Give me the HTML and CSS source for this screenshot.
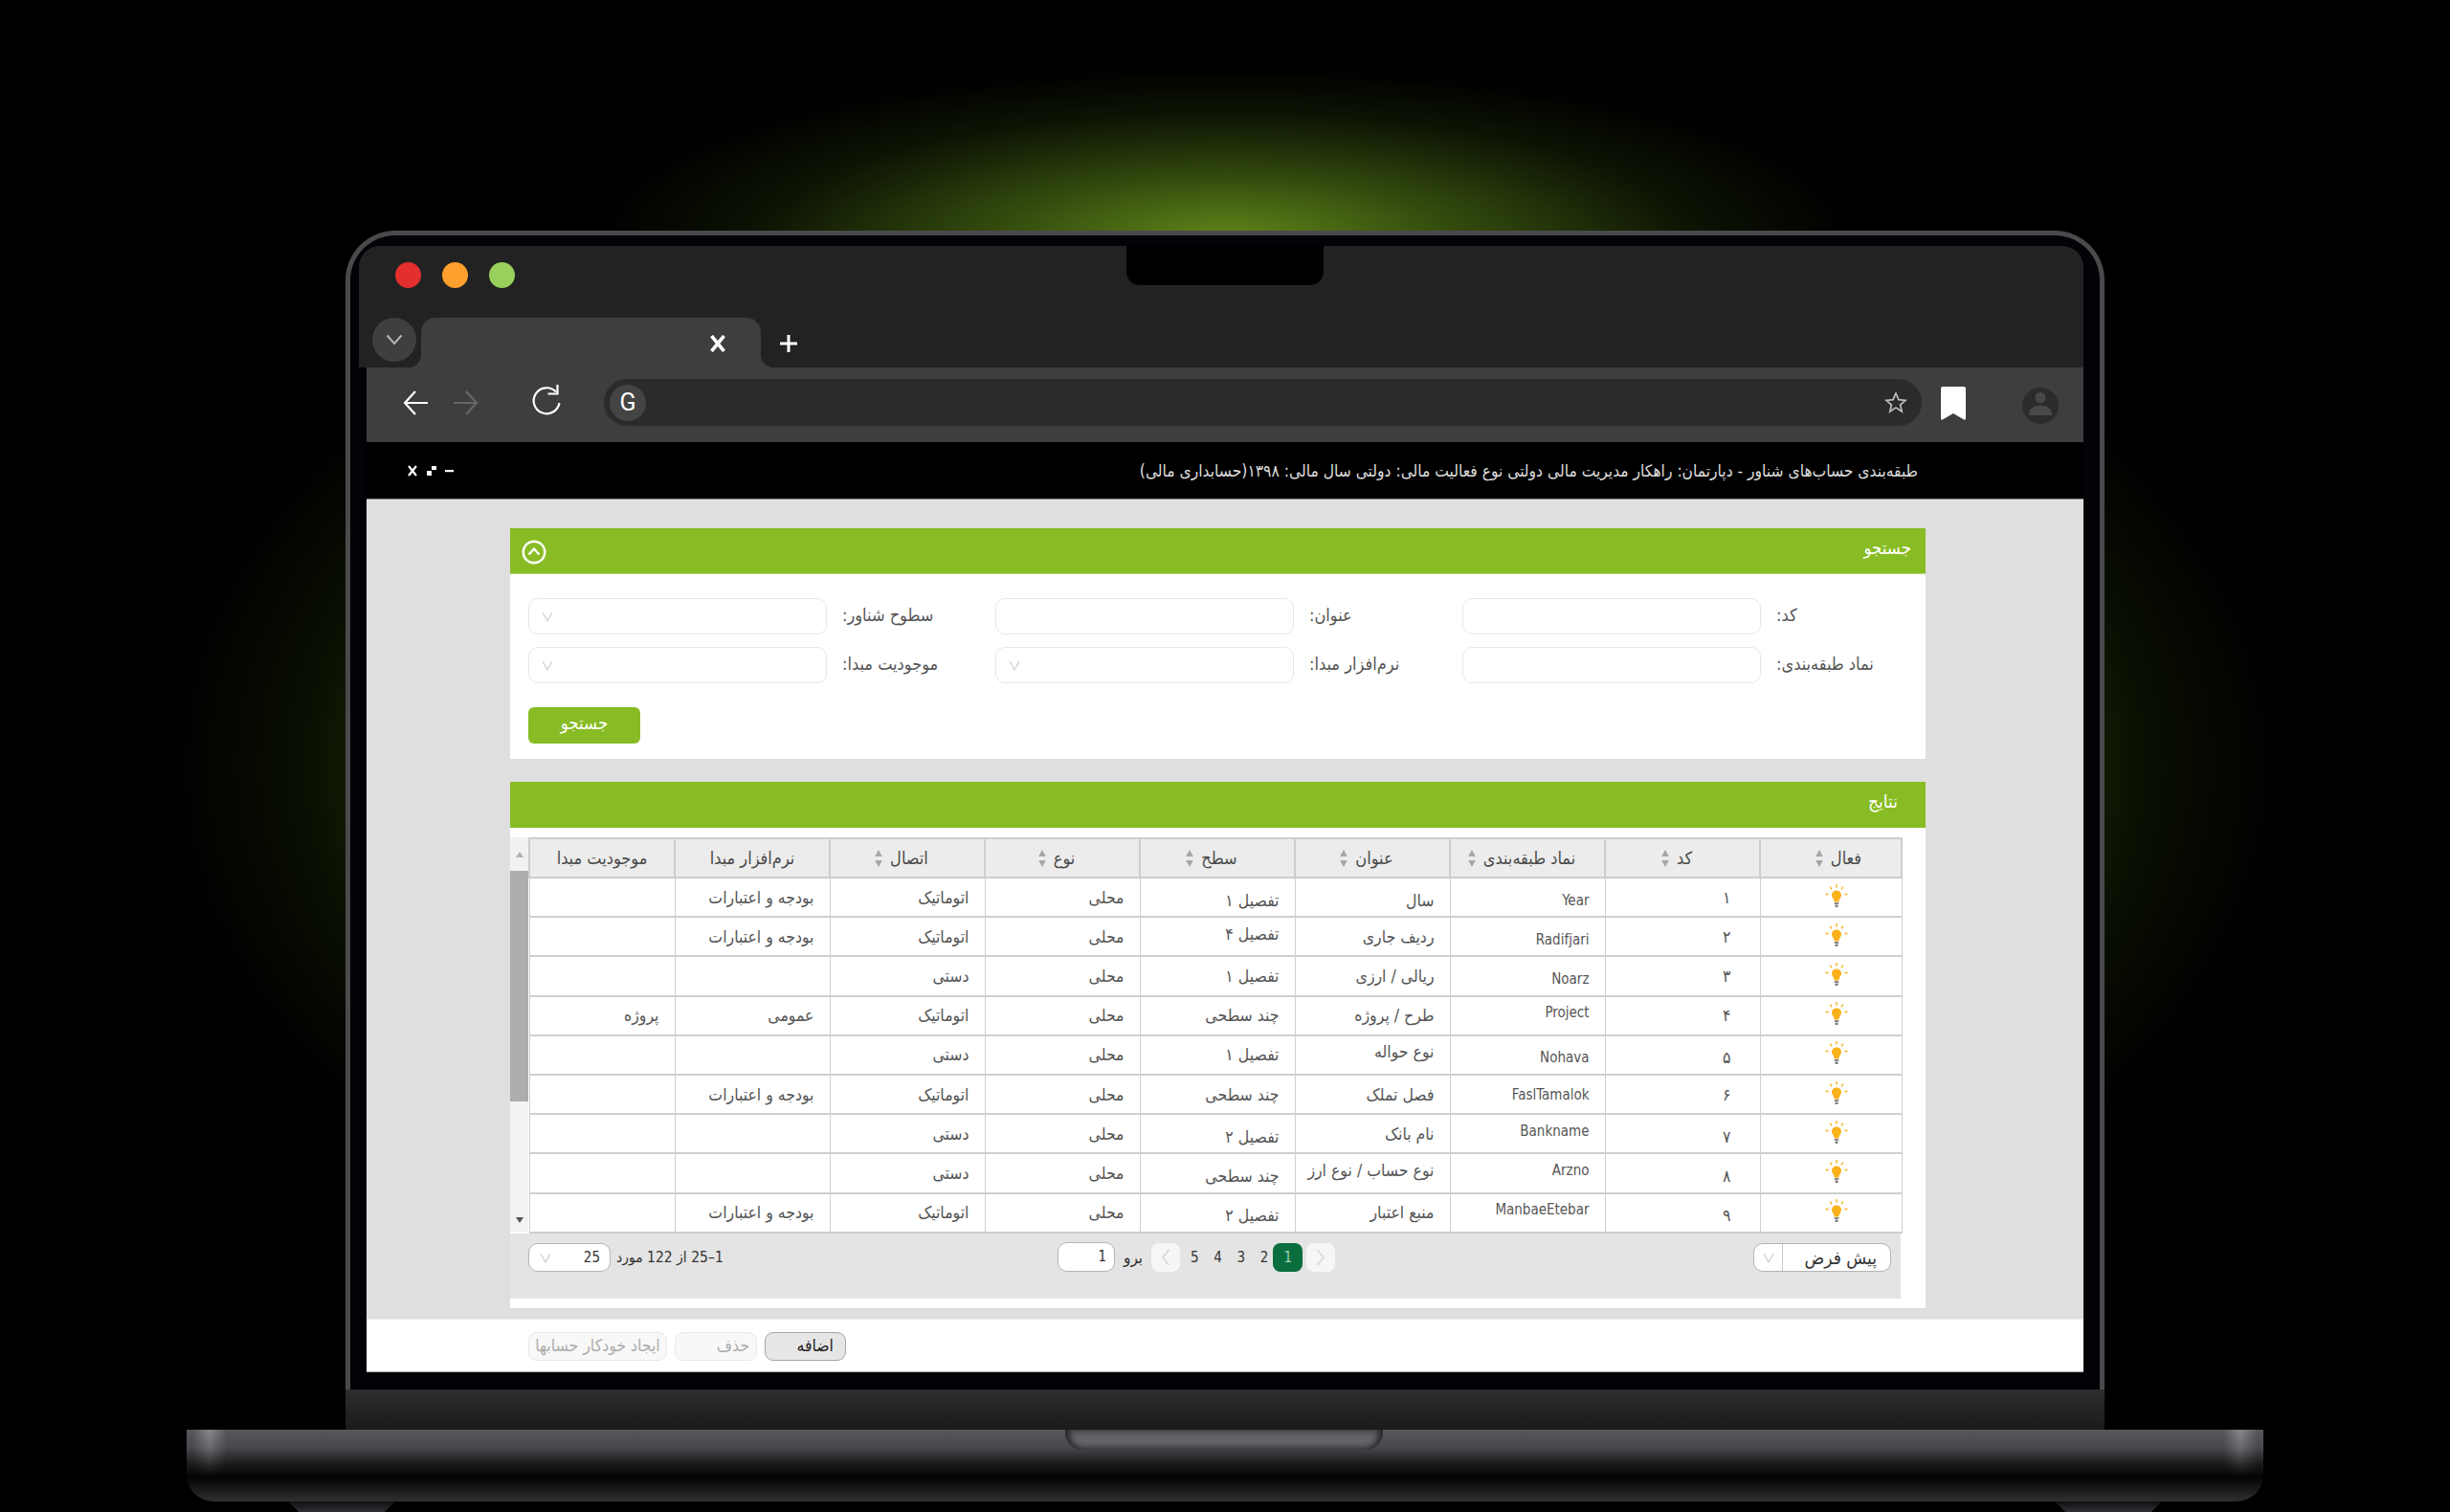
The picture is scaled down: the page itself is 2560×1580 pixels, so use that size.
FILE: index.html
```html
<!DOCTYPE html>
<html lang="fa">
<head>
<meta charset="utf-8">
<title>طبقه‌بندی حساب‌های شناور</title>
<link rel="stylesheet" href="styles.css">
</head>
<body>
<svg class="defs" width="0" height="0" aria-hidden="true">
  <symbol id="bulb" viewBox="0 0 24 26">
    <path d="M12 6.500c-3 0-5 2.200-5 4.800 0 2.300 1.600 3.500 2.200 5.100.3.700.4 1.500.5 2.100h4.600c.1-.6.200-1.400.5-2.100.6-1.600 2.200-2.800 2.200-5.100 0-2.600-2-4.800-5-4.800z" fill="#fbb11a"/>
    <rect x="9.800" y="19" width="4.400" height="2.200" fill="#8a8a8a"/>
    <rect x="10.400" y="21.700" width="3.200" height="2.200" rx="1" fill="#777"/>
    <path d="M12 0v3.500M5.200 2.500l1.700 2.800M18.800 2.500l-1.700 2.800M.5 10.500h3M20.500 10.500h3" stroke="#fbb11a" stroke-width="1.400" fill="none"/>
  </symbol>
  <symbol id="sort" viewBox="0 0 8 20">
    <path d="M4 1l3.800 7H.2zM4 19l3.800-7H.2z" fill="#a6a6a6"/>
  </symbol>
  <symbol id="chev" viewBox="0 0 14 14">
    <path d="M2 3l5 9 5-9" fill="none" stroke="#cfcfcf" stroke-width="1.300"/>
  </symbol>
</svg>
<div class="stage">
  <div class="glow"></div>
  <div class="lid">
    <div class="notch"></div>
    <div class="titlebar">
      <div class="dots"><span class="dot red"></span><span class="dot orange"></span><span class="dot green"></span></div>
      <div class="tabstrip">
        <div class="tabmenu"><svg width="18" height="12" viewBox="0 0 18 12"><path d="M1.500 1.500L9 10l7.500-8.500" fill="none" stroke="#b5b5b5" stroke-width="2"/></svg></div>
        <div class="tab"><svg class="tabclose" width="18" height="18" viewBox="0 0 18 18"><path d="M2.500 1l13 16M15.500 1l-13 16" stroke="#fff" stroke-width="3.600" fill="none"/></svg></div>
        <svg class="tabplus" width="18" height="18" viewBox="0 0 18 18"><path d="M9 0v18M0 9h18" stroke="#fff" stroke-width="3" fill="none"/></svg>
      </div>
    </div>
    <div class="toolbar">
      <svg class="nav back" width="30" height="30" viewBox="0 0 30 30"><path d="M27 15H4M14 3L3 15l11 12" fill="none" stroke="#fff" stroke-width="2.200"/></svg>
      <svg class="nav fwd" width="30" height="30" viewBox="0 0 30 30"><path d="M3 15h23M16 3l11 12-11 12" fill="none" stroke="#666" stroke-width="2.200"/></svg>
      <svg class="nav reload" width="32" height="34" viewBox="0 0 32 34"><path d="M26 8.500A13.500 13.500 0 1 0 29.500 20" fill="none" stroke="#fff" stroke-width="2.200"/><path d="M27.500 1v9.500H17.500" fill="none" stroke="#fff" stroke-width="2.200"/></svg>
      <div class="address">
        <span class="gcircle">G</span>
        <svg class="star" width="24" height="24" viewBox="0 0 24 24"><path d="M12 2l2.900 6.600 7.100.7-5.400 4.700 1.600 7L12 16.900 5.800 21l1.600-7L2 9.300l7.100-.7z" fill="none" stroke="#bdbdbd" stroke-width="1.700"/></svg>
      </div>
      <svg class="bookmark" width="26" height="35" viewBox="0 0 26 35"><path d="M2 0h22a2 2 0 0 1 2 2v31.500a1.200 1.200 0 0 1-1.800 1L13 28 1.800 34.500a1.200 1.200 0 0 1-1.800-1V2a2 2 0 0 1 2-2z" fill="#fff"/></svg>
      <svg class="avatar" width="38" height="38" viewBox="0 0 38 38"><circle cx="19" cy="19" r="19" fill="#2b2b2b"/><circle cx="19" cy="10.500" r="5.500" fill="#484848"/><path d="M7 29c0-7 5-10.500 12-10.500S31 22 31 29z" fill="#484848"/></svg>
    </div>
    <div class="appbar">
      <svg class="winctl" width="50" height="12" viewBox="0 0 50 12"><path d="M1 1l8 10M9 1L1 11" stroke="#fff" stroke-width="2.200" fill="none"/><rect x="20" y="6" width="5" height="5" fill="#fff"/><rect x="25" y="1" width="5" height="4" fill="#fff"/><rect x="39" y="5" width="9" height="2.200" fill="#fff"/></svg>
      <div class="apptitle" dir="rtl">طبقه‌بندی حساب‌های شناور - دپارتمان: راهکار مدیریت مالی دولتی نوع فعالیت مالی: دولتی سال مالی: ۱۳۹۸(حسابداری مالی)</div>
    </div>
    <main class="main">
      <section class="panel search">
        <header class="phead">
          <svg class="collapse" width="26" height="26" viewBox="0 0 26 26"><circle cx="13" cy="13" r="11.300" fill="none" stroke="#fff" stroke-width="2.400"/><path d="M7.500 15.500L13 9.500l5.500 6" fill="none" stroke="#fff" stroke-width="2.400"/></svg>
          <span class="ptitle" dir="rtl">جستجو</span>
        </header>
        <div class="form">
          <div class="field"><div class="ctl"><svg class="cv" width="14" height="14"><use href="#chev"/></svg></div><label dir="rtl">سطوح شناور:</label></div>
          <div class="field"><div class="ctl"></div><label dir="rtl">عنوان:</label></div>
          <div class="field"><div class="ctl"></div><label dir="rtl">کد:</label></div>
          <div class="field"><div class="ctl"><svg class="cv" width="14" height="14"><use href="#chev"/></svg></div><label dir="rtl">موجودیت مبدا:</label></div>
          <div class="field"><div class="ctl"><svg class="cv" width="14" height="14"><use href="#chev"/></svg></div><label dir="rtl">نرم‌افزار مبدا:</label></div>
          <div class="field"><div class="ctl"></div><label dir="rtl">نماد طبقه‌بندی:</label></div>
        </div>
        <div class="searchbtn" dir="rtl">جستجو</div>
      </section>
      <section class="panel results">
        <header class="rhead"><span class="rtitle" dir="rtl">نتایج</span></header>
        <div class="rbody">
          <div class="scroll">
            <div class="sbtn up"></div>
            <div class="thumb"></div>
            <div class="track"></div>
            <div class="sbtn down"></div>
          </div>
          <table class="grid" dir="rtl">
            <colgroup><col class="c1"><col class="cn"><col class="cn"><col class="cn"><col class="cn"><col class="cn"><col class="cn"><col class="cn"><col class="c9"></colgroup>
            <thead>
              <tr>
                <th><span class="thin first">فعال<svg class="srt" width="8" height="20"><use href="#sort"/></svg></span></th>
                <th><span class="thin">کد<svg class="srt" width="8" height="20"><use href="#sort"/></svg></span></th>
                <th><span class="thin">نماد طبقه‌بندی<svg class="srt" width="8" height="20"><use href="#sort"/></svg></span></th>
                <th><span class="thin">عنوان<svg class="srt" width="8" height="20"><use href="#sort"/></svg></span></th>
                <th><span class="thin">سطح<svg class="srt" width="8" height="20"><use href="#sort"/></svg></span></th>
                <th><span class="thin">نوع<svg class="srt" width="8" height="20"><use href="#sort"/></svg></span></th>
                <th><span class="thin">اتصال<svg class="srt" width="8" height="20"><use href="#sort"/></svg></span></th>
                <th>نرم‌افزار مبدا</th>
                <th>موجودیت مبدا</th>
              </tr>
            </thead>
            <tbody>
              <tr><td class="bc"><svg class="bulb" width="24" height="26"><use href="#bulb"/></svg></td><td class="code">۱</td><td class="en dn">Year</td><td class="dn">سال</td><td class="dn">تفصیل ۱</td><td>محلی</td><td>اتوماتیک</td><td>بودجه و اعتبارات</td><td></td></tr>
              <tr><td class="bc"><svg class="bulb" width="24" height="26"><use href="#bulb"/></svg></td><td class="code">۲</td><td class="en dn">Radifjari</td><td>ردیف جاری</td><td class="up">تفصیل ۴</td><td>محلی</td><td>اتوماتیک</td><td>بودجه و اعتبارات</td><td></td></tr>
              <tr><td class="bc"><svg class="bulb" width="24" height="26"><use href="#bulb"/></svg></td><td class="code">۳</td><td class="en dn">Noarz</td><td>ریالی / ارزی</td><td>تفصیل ۱</td><td>محلی</td><td>دستی</td><td></td><td></td></tr>
              <tr><td class="bc"><svg class="bulb" width="24" height="26"><use href="#bulb"/></svg></td><td class="code">۴</td><td class="en up">Project</td><td>طرح / پروژه</td><td>چند سطحی</td><td>محلی</td><td>اتوماتیک</td><td>عمومی</td><td>پروژه</td></tr>
              <tr><td class="bc"><svg class="bulb" width="24" height="26"><use href="#bulb"/></svg></td><td class="code dn">۵</td><td class="en dn">Nohava</td><td class="up">نوع حواله</td><td>تفصیل ۱</td><td>محلی</td><td>دستی</td><td></td><td></td></tr>
              <tr><td class="bc"><svg class="bulb" width="24" height="26"><use href="#bulb"/></svg></td><td class="code">۶</td><td class="en">FaslTamalok</td><td>فصل تملک</td><td>چند سطحی</td><td>محلی</td><td>اتوماتیک</td><td>بودجه و اعتبارات</td><td></td></tr>
              <tr><td class="bc"><svg class="bulb" width="24" height="26"><use href="#bulb"/></svg></td><td class="code dn">۷</td><td class="en up">Bankname</td><td>نام بانک</td><td class="dn">تفصیل ۲</td><td>محلی</td><td>دستی</td><td></td><td></td></tr>
              <tr><td class="bc"><svg class="bulb" width="24" height="26"><use href="#bulb"/></svg></td><td class="code dn">۸</td><td class="en up">Arzno</td><td class="up">نوع حساب / نوع ارز</td><td class="dn">چند سطحی</td><td>محلی</td><td>دستی</td><td></td><td></td></tr>
              <tr><td class="bc"><svg class="bulb" width="24" height="26"><use href="#bulb"/></svg></td><td class="code dn">۹</td><td class="en up">ManbaeEtebar</td><td>منبع اعتبار</td><td class="dn">تفصیل ۲</td><td>محلی</td><td>اتوماتیک</td><td>بودجه و اعتبارات</td><td></td></tr>
            </tbody>
          </table>
        </div>
        <div class="pager">
          <div class="pleft">
            <div class="psize"><svg class="cv" width="14" height="14"><use href="#chev"/></svg><span>25</span></div>
            <span class="ptext" dir="rtl">1–25 از 122 مورد</span>
          </div>
          <div class="pmid">
            <div class="goto">1</div>
            <span class="golabel" dir="rtl">برو</span>
            <div class="pbtn"><svg width="10" height="18" viewBox="0 0 10 18"><path d="M8.500 1L2 9l6.500 8" fill="none" stroke="#d5d5d5" stroke-width="1.500"/></svg></div>
            <span class="pnum lead">5</span><span class="pnum">4</span><span class="pnum">3</span><span class="pnum">2</span>
            <div class="pcur">1</div>
            <div class="pbtn next"><svg width="10" height="18" viewBox="0 0 10 18"><path d="M1.500 1L8 9l-6.500 8" fill="none" stroke="#d5d5d5" stroke-width="1.500"/></svg></div>
          </div>
          <div class="pdefault">
            <div class="pdchev"><svg width="14" height="14"><use href="#chev"/></svg></div>
            <div class="pdtext" dir="rtl">پیش فرض</div>
          </div>
        </div>
      </section>
    </main>
    <footer class="actions">
      <div class="btn off wide" dir="rtl">ایجاد خودکار حسابها</div>
      <div class="btn off mid" dir="rtl">حذف</div>
      <div class="btn on" dir="rtl">اضافه</div>
    </footer>
  </div>
  <div class="deck"></div>
  <div class="base">
    <div class="thumbcut"></div>
  </div>
  <div class="feet"><div class="foot"></div><div class="foot"></div></div>
</div>
</body>
</html>
```

FILE: styles.css
```css
* { box-sizing: border-box; }
html, body { margin: 0; padding: 0; background: #000; }
body { font-family: "DejaVu Sans Condensed", "DejaVu Sans", sans-serif; font-size: 15px; color: #333; }
.defs { position: absolute; }
.stage { position: relative; width: 2560px; height: 1580px; overflow: hidden; background: #000; padding-top: 241px; }
.glow {
  position: absolute; inset: 0;
  background:
    radial-gradient(ellipse 660px 175px at 1280px 245px, rgba(108,150,28,.85) 0%, rgba(90,130,24,.55) 35%, rgba(70,110,20,.18) 72%, rgba(70,110,20,0) 100%),
    radial-gradient(ellipse 1110px 640px at 1280px 800px, rgba(80,125,18,.36) 74%, rgba(70,110,15,.13) 87%, rgba(60,100,10,0) 100%);
}

/* laptop */
.lid {
  position: relative; width: 1838px; height: 1211px; margin: 0 auto;
  background: #020207; border: 5px solid #4a4a4c; border-bottom: 0;
  border-radius: 52px 52px 0 0; padding: 11px 17px 18px 9px;
}
.notch { position: absolute; left: 811px; top: 11px; width: 206px; height: 41px; background: #000; border-radius: 0 0 14px 14px; z-index: 2; }
.deck { position: relative; width: 1838px; height: 42px; margin: 0 auto; background: linear-gradient(#2f2d2e, #1b1b1b); }
.base {
  position: relative; width: 2170px; height: 75px; margin: 0 auto; border-radius: 0 0 28px 28px;
  background: linear-gradient(#57585c 0%, #47484c 25%, #1a1a1b 48%, #030303 66%, #303032 100%);
}
.base::before, .base::after {
  content: ""; position: absolute; top: 0; width: 36px; height: 50px;
  background: linear-gradient(90deg, transparent, rgba(255,255,255,.3), transparent);
  -webkit-mask-image: linear-gradient(#000, transparent);
  mask-image: linear-gradient(#000, transparent);
}
.base::before { left: 6px; }
.base::after { right: 6px; }
.thumbcut {
  position: absolute; left: 918px; top: 0; width: 332px; height: 21px; border-radius: 0 0 18px 18px;
  background: linear-gradient(#58595d, #66676b 55%, #4a4b4f);
  box-shadow: inset 7px 0 6px -2px #2a2a2c, inset -7px 0 6px -2px #2a2a2c;
}
.feet { display: flex; justify-content: space-between; width: 1958px; margin: 0 auto; }
.foot { width: 112px; height: 11px; clip-path: polygon(0 0, 100% 0, 90% 100%, 10% 100%); background: linear-gradient(#101012, #303034); }

/* title bar */
.titlebar { height: 127px; background: #222; border-radius: 22px 22px 0 0; display: flex; flex-direction: column; justify-content: space-between; }
.dots { display: flex; gap: 22px; padding: 17px 0 0 38px; }
.dot { width: 27px; height: 27px; border-radius: 50%; }
.red { background: #e32f2d; }
.orange { background: #ff9f2d; }
.green { background: #98d05b; }
.tabstrip { display: flex; align-items: flex-end; padding-left: 14px; }
.tabmenu { width: 46px; height: 46px; border-radius: 50%; background: #3f3f3f; margin-bottom: 6px; display: flex; align-items: center; justify-content: center; }
.tab { position: relative; width: 355px; height: 52px; margin-left: 5px; background: #3e3e3e; border-radius: 15px 15px 0 0; display: flex; align-items: center; justify-content: flex-end; padding: 2px 36px 0 0; }
.tab::before, .tab::after { content: ""; position: absolute; bottom: 0; width: 14px; height: 14px; }
.tab::before { left: -14px; background: radial-gradient(circle at 0 0, transparent 14px, #3e3e3e 14.500px); }
.tab::after { right: -14px; background: radial-gradient(circle at 100% 0, transparent 14px, #3e3e3e 14.500px); }
.tabplus { margin: 0 0 16px 20px; }

/* toolbar */
.toolbar { height: 78px; margin-left: 8px; background: #3e3e3e; display: flex; align-items: flex-start; padding: 12px 0 0 37px; }
.nav { margin-top: 10px; flex: none; }
.fwd { margin-left: 21px; }
.reload { margin: 5px 0 0 54px; }
.address { flex: none; width: 1377px; height: 49px; margin-left: 44px; background: #2b2b2b; border-radius: 25px; display: flex; align-items: center; justify-content: space-between; padding: 0 15px 0 6px; }
.gcircle { width: 38px; height: 38px; border-radius: 50%; background: #444; color: #fff; font: 25px/38px Roboto, sans-serif; text-align: center; }
.bookmark { margin: 8px 0 0 20px; flex: none; }
.avatar { margin: 9px 0 0 59px; flex: none; }

/* app bar */
.appbar { height: 60px; margin-left: 8px; background: #000; border-bottom: 1px solid #8a8a8a; display: flex; align-items: center; justify-content: space-between; padding: 0 173px 0 43px; }
.apptitle { font-size: 17.300px; color: #ddd; white-space: nowrap; }

/* main */
.main { height: 856px; margin-left: 8px; background: #dfdfdf; padding: 30px 165px 0 150px; }
.panel { background: #fff; }
.search { height: 241px; margin-bottom: 24px; }
.phead { height: 48px; background: #88bc24; border-bottom: 1px solid #b5d77a; display: flex; justify-content: space-between; align-items: flex-start; padding: 12px 15px 0 12px; color: #fff; }
.ptitle { font-size: 18.500px; line-height: 18px; }
.form { display: grid; grid-template-columns: 488px 488px 1fr; row-gap: 13px; padding: 25px 0 0 19px; }
.field { display: flex; align-items: center; height: 38px; }
.ctl { width: 312px; height: 38px; background: #fff; border: 1.500px solid #e8e8e8; border-radius: 10px; padding-left: 12px; display: flex; align-items: center; flex: none; }
.field label { margin: 0 0 3px 16px; font-size: 18px; color: #555; white-space: nowrap; }
.searchbtn { width: 117px; height: 38px; margin: 25px 0 0 19px; background: #88bc24; color: #fff; border-radius: 6px; font-size: 18.500px; line-height: 34px; text-align: center; }

.results { height: 550px; }
.rhead { height: 48px; background: #88bc24; display: flex; justify-content: flex-end; padding: 8px 29px 0 0; color: #fff; }
.rtitle { font-size: 19px; line-height: 24px; }
.rbody { display: flex; padding-top: 10px; margin-right: 25px; }
.scroll { width: 19px; height: 412px; display: flex; flex-direction: column; flex: none; background: #f3f3f3; }
.sbtn { height: 35px; display: flex; align-items: center; justify-content: center; background: #f1f1f1; flex: none; }
.sbtn.up::before { content: ""; border: 4px solid transparent; border-top: 0; border-bottom: 6px solid #b0b0b0; }
.sbtn.down { height: 13px; background: transparent; margin-bottom: 6px; }
.sbtn.down::before { content: ""; border: 4px solid transparent; border-bottom: 0; border-top: 6px solid #555; }
.thumb { height: 241px; background: #adadad; flex: none; }
.track { flex: 1; }

.grid { width: 1434px; height: 412px; table-layout: fixed; border-collapse: collapse; font-size: 17.500px; color: #555; }
.c1 { width: 148px; }
.cn { width: 162px; }
.c9 { width: 152px; }
.grid th { height: 41px; background: #ececec; border: 2px solid #cdcdcd; font-weight: 400; font-size: 18px; color: #4a4a4a; padding: 0; text-align: center; }
.grid td { height: 41.200px; border: 1px solid #cfcfcf; border-bottom-width: 2px; padding: 0 16px 0 2px; text-align: right; line-height: 20px; white-space: nowrap; }
.thin { display: inline-flex; align-items: center; gap: 8px; margin-right: 12px; }
.thin.first { margin: 0 0 0 16px; }
.srt { flex: none; }
.grid td.bc { text-align: center; padding: 0 0 2px 12px; }
.bulb { display: block; margin: 0 auto; }
.grid td.code { padding-right: 30px; }
.grid td.dn { padding-top: 6px; }
.grid td.up { padding-bottom: 6px; }
.grid td.en { font-size: 15px; }

/* pager */
.pager { height: 68px; margin-right: 26px; background: #e4e4e4; display: flex; padding: 10px 10px 0 19px; align-items: flex-start; }
.pleft { width: 553px; display: flex; align-items: center; gap: 6px; flex: none; }
.psize { width: 86px; height: 30px; background: #fff; border: 1.500px solid #b4b4b4; border-radius: 10px; display: flex; align-items: center; justify-content: space-between; padding: 0 10px; font-size: 15px; }
.ptext { font-size: 15.500px; white-space: nowrap; }
.pmid { display: flex; align-items: center; height: 30px; }
.goto { width: 60px; height: 31px; background: #fff; border: 1.500px solid #b4b4b4; border-radius: 10px; text-align: right; padding-right: 8px; line-height: 28px; }
.golabel { font-size: 17px; margin: 0 9px 0 9px; }
.pbtn { width: 30px; height: 30px; background: #f6f6f6; border-radius: 8px; display: flex; align-items: center; justify-content: center; }
.pnum { width: 24.300px; text-align: center; }
.lead { margin-left: 3px; }
.pcur { width: 31px; height: 30px; margin-left: -3px; background: #0b6e3f; color: #9fd3b8; border-radius: 8px; text-align: center; line-height: 30px; }
.next { margin-left: 4px; }
.pdefault { margin-left: auto; width: 144px; height: 30px; background: #fff; border: 1.500px solid #b4b4b4; border-radius: 10px; display: flex; align-items: center; }
.pdchev { width: 30px; height: 100%; border-right: 1.500px solid #c8c8c8; display: flex; align-items: center; justify-content: center; flex: none; }
.pdtext { flex: 1; padding-right: 14px; font-size: 19px; color: #333; text-align: right; }

/* footer */
.actions { height: 56px; margin-left: 8px; background: #fff; border-bottom: 1px solid #aaa; border-top: 1px solid #eee; display: flex; gap: 8px; padding: 13px 0 0 169px; }
.btn { height: 30px; border-radius: 9px; text-align: center; font-size: 17.500px; line-height: 26px; white-space: nowrap; }
.off { background: #f8f8f8; border: 1.500px solid #e8e8e8; color: #adadad; }
.wide { width: 145px; }
.mid { width: 86px; text-align: right; padding-right: 7px; }
.on { width: 85px; background: #e6e6e6; border: 1.500px solid #a6a6a6; color: #222; text-align: right; padding-right: 12px; }
```
